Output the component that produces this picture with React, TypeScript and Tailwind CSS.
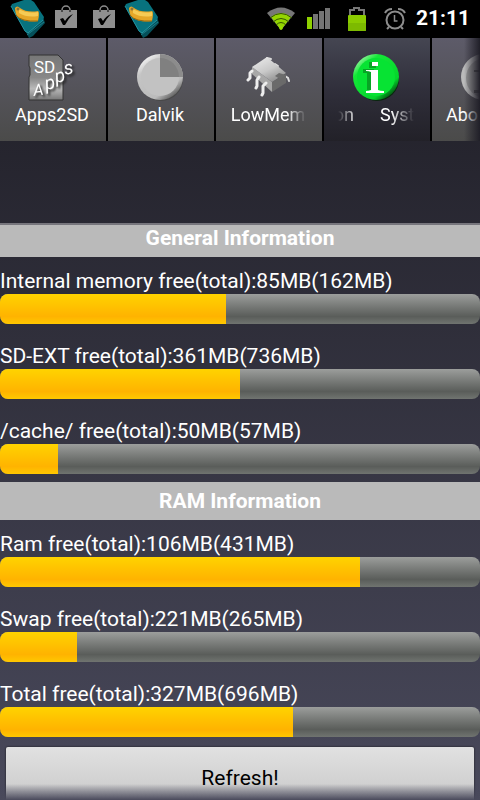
import type { ReactNode } from "react";

const general = [
  { label: "Internal memory free(total):85MB(162MB)", used: 47 },
  { label: "SD-EXT free(total):361MB(736MB)", used: 50 },
  { label: "/cache/ free(total):50MB(57MB)", used: 12 },
];

const ram = [
  { label: "Ram free(total):106MB(431MB)", used: 75 },
  { label: "Swap free(total):221MB(265MB)", used: 16 },
  { label: "Total free(total):327MB(696MB)", used: 61 },
];

function CardsIcon() {
  return (
    <svg viewBox="0 0 36 38" className="h-[38px] w-9 shrink-0">
      <path d="M2 9L17 34L19 38L23 36L35 23L33 17L24 3Z" fill="#05505a" />
      <path d="M17 35L34 22" stroke="#1b7d89" />
      <path d="M14 0H21L24 2L34 17L33 20L18 33L15 31L1 6L2 4Z" fill="#08727e" />
      <path d="M1 6L15 31L18 33L33 20" fill="none" stroke="#2395a2" />
      <path d="M5 8Q7 5 10 8Q17 13 28 11Q30 12 28 21Q17 23 9 18Q5 15 5 8Z" fill="#e5a728" />
      <path d="M9 9Q17 14 28 12L28 16Q17 18 9 13Z" fill="#f5cb55" />
      <path d="M6 15Q11 22 28 21" fill="none" stroke="#99680e" />
      <circle cx="8" cy="9" r="1.5" fill="#8c7338" />
    </svg>
  );
}

function BagIcon() {
  return (
    <svg viewBox="0 0 22 28" className="mt-1 h-7 w-[22px] shrink-0">
      <path d="M7 8V6a4 4 0 0 1 8 0v2" fill="none" stroke="#8c8c8c" strokeWidth="1.5" />
      <path d="M0 6H22V24H0Z" fill="#8f8f8f" />
      <path d="M7 6v2M15 6v2" stroke="#333" strokeWidth="1.5" />
      <path d="M5 15L8 14L10 17Q13 12 18 10Q13 15 10 21L8 21Z" fill="#000" />
    </svg>
  );
}

function WifiIcon() {
  return (
    <svg viewBox="0 0 30 24" className="h-6 w-[30px]">
      <path d="M15 23L1 6Q15 -5 29 6Z" fill="#777" />
      <path d="M15 23L5 10Q15 2 25 10Z" fill="#94d500" />
      <path d="M4 11Q15 2 26 11M7 15Q15 8 23 15M10 18Q15 13 20 18" fill="none" stroke="#345500" strokeWidth="1" />
      <circle cx="15" cy="21" r="1.8" fill="#9be000" />
    </svg>
  );
}

function SignalIcon() {
  return (
    <svg viewBox="0 0 24 22" className="h-[22px] w-6">
      <path d="M0 9h5v12H0Z" fill="#8fd100" />
      <path d="M6 6h5v15H6ZM12 3h5v18h-5ZM18 0h5v21h-5Z" fill="#747474" />
    </svg>
  );
}

function BatteryIcon() {
  return (
    <svg viewBox="0 0 20 26" className="h-[26px] w-5">
      <path d="M3 10V4H7V2H12V4H17V10" fill="none" stroke="#777" strokeWidth="2" />
      <rect x="1" y="9" width="18" height="16" rx="1" fill="#8bcb00" />
      <rect x="1" y="17" width="18" height="8" rx="1" fill="#7dba00" />
    </svg>
  );
}

function AlarmIcon() {
  return (
    <svg viewBox="0 0 22 24" className="h-6 w-[22px]" fill="none" stroke="#8d8d8d" strokeWidth="2">
      <circle cx="11" cy="13" r="8.5" />
      <path d="M10.5 8v6h3" strokeWidth="1.5" />
      <path d="M1 6Q3 2 8 2M21 6Q19 2 14 2M5 20l-2 2M17 20l2 2" />
    </svg>
  );
}

function SdIcon() {
  return (
    <svg viewBox="0 0 48 48" className="h-12 w-12 overflow-visible">
      <defs>
        <linearGradient id="card" x1="0" y1="0" x2="0" y2="1">
          <stop offset="0" stopColor="#777" />
          <stop offset=".5" stopColor="#888" />
          <stop offset=".75" stopColor="#bbb" />
          <stop offset="1" stopColor="#777" />
        </linearGradient>
      </defs>
      <path d="M1 1H30L35 6V46H1V23L2 21V14L1 12Z" fill="url(#card)" stroke="#333" />
      <text x="6" y="19" fontSize="17" fill="#fff">SD</text>
      <g fontSize="19" fontStyle="italic" fill="#fff" className="drop-shadow-[2px_2px_1px_#222]">
        <text x="6" y="42" fontSize="16" transform="rotate(-8 6 42)">A</text>
        <text x="18" y="36" transform="rotate(-12 18 36)">p</text>
        <text x="28" y="29" transform="rotate(-12 28 29)">p</text>
        <text x="37" y="21" transform="rotate(-12 37 21)">s</text>
      </g>
    </svg>
  );
}

function PieIcon() {
  return (
    <svg viewBox="0 0 48 48" className="h-12 w-12">
      <defs>
        <linearGradient id="disc" x1=".2" y1=".1" x2=".8" y2=".9">
          <stop offset="0" stopColor="#eee" />
          <stop offset=".2" stopColor="#c5c5c5" />
          <stop offset=".8" stopColor="#bbb" />
          <stop offset="1" stopColor="#666" />
        </linearGradient>
      </defs>
      <circle cx="25" cy="25" r="22" fill="#484848" />
      <circle cx="24" cy="23" r="23" fill="url(#disc)" />
      <circle cx="24" cy="23" r="19" fill="#c2c2c2" />
      <path d="M24 0A23 23 0 0 1 47 23H24Z" fill="#8c8c8c" />
      <path d="M24 4A19 19 0 0 1 43 23H24Z" fill="#808080" />
    </svg>
  );
}

function ChipIcon() {
  return (
    <svg viewBox="0 0 48 48" className="h-12 w-12">
      <defs>
        <linearGradient id="chip" x1=".2" y1="0" x2=".8" y2="1">
          <stop offset="0" stopColor="#e8e8e8" />
          <stop offset=".5" stopColor="#c9c9c9" />
          <stop offset="1" stopColor="#858585" />
        </linearGradient>
      </defs>
      <path d="M23 4l4 1M31 10l3 2M41 22l3 2 1 3" fill="none" stroke="#ddd" strokeWidth="2" strokeLinecap="round" />
      <path d="M8 13L28 28V38L8 20Z" fill="#a8a8a8" />
      <path d="M28 28L42 20V29L28 38Z" fill="#6a6a6a" />
      <path d="M8 13L23 3L42 19L28 28Z" fill="url(#chip)" />
      <path d="M31 22l4-3 7 2-6 4Z" fill="#6c6c6c" />
      <path d="M8 17l-2 2v5l-2 2M15 23l-2 3v6l-1 2M22 29l-3 3v7l-1 2" fill="none" stroke="#eee" strokeWidth="3" strokeLinejoin="round" strokeLinecap="round" />
    </svg>
  );
}

function InfoIcon() {
  return (
    <svg viewBox="0 0 48 48" className="h-12 w-12">
      <defs>
        <linearGradient id="green" x1=".15" y1=".1" x2=".85" y2=".9">
          <stop offset="0" stopColor="#8ff59a" />
          <stop offset=".2" stopColor="#14e837" />
          <stop offset=".8" stopColor="#05d42c" />
          <stop offset="1" stopColor="#034d10" />
        </linearGradient>
      </defs>
      <circle cx="25" cy="25" r="22" fill="#08260d" />
      <circle cx="24" cy="23" r="23" fill="url(#green)" />
      <circle cx="24" cy="23" r="19" fill="#07e333" />
      <path d="M17 8h7v6h-7ZM11 15h11v21h-7V19h-4Z" fill="#087b1b" opacity=".6" />
      <path d="M20 8h6v4h-6ZM14 16h12v20q2 1 6 1v2H14v-2q3 0 5-1V18q-2-1-5-1Z" fill="#fff" />
    </svg>
  );
}

function AboutIcon() {
  return (
    <svg viewBox="0 0 48 48" className="h-12 w-12">
      <circle cx="24" cy="23" r="23" fill="#bbb" />
      <circle cx="26" cy="24" r="20" fill="#999" />
      <path d="M20 8h7v5h-7ZM14 16h13v20h5v3H14v-3h6V18h-6Z" fill="#555" />
    </svg>
  );
}

function Tab({ icon, active, children }: { icon: ReactNode; active?: boolean; children: ReactNode }) {
  return (
    <button
      role="tab"
      aria-selected={!!active}
      className={`flex w-[106px] shrink-0 flex-col items-center pt-4 pr-0.5 ${
        active ? "bg-linear-to-b from-[#454652] via-[#302f3b] to-[#222128]" : "bg-linear-to-b from-[#5d5b69] to-[#4b4b4a]"
      }`}
    >
      {icon}
      <span className="block text-lg leading-[26px] text-white">{children}</span>
    </button>
  );
}

function SectionTitle({ children }: { children: ReactNode }) {
  return (
    <h2 className="flex h-[38px] shrink-0 items-center justify-center bg-[#bababa] pt-0.5 text-[21px] font-bold text-white">
      {children}
    </h2>
  );
}

function Meter({ label, used }: { label: string; used: number }) {
  return (
    <div className="shrink-0 pt-2.5 pb-2">
      <div className="h-[27px] text-[21px] leading-7 whitespace-nowrap text-white">{label}</div>
      <div
        role="progressbar"
        aria-label={label}
        aria-valuenow={used}
        className="h-[30px] overflow-hidden rounded-lg bg-linear-to-b from-[#9c9e9c] via-[#5a5d5a] via-75% to-[#707470]"
      >
        <div className="h-full bg-linear-to-b from-[#ffd300] via-[#ffb300] via-75% to-[#ffc800]" style={{ width: `${used}%` }} />
      </div>
    </div>
  );
}

export default function App() {
  return (
    <div className="flex h-screen flex-col overflow-hidden bg-linear-to-b from-[#1e1d25] to-[#49495b] font-[Roboto,sans-serif]">
      <header className="flex h-[38px] shrink-0 items-center justify-between bg-black px-2.5">
        <div className="flex items-start">
          <CardsIcon />
          <div className="ml-[9px] flex gap-4">
            <BagIcon />
            <BagIcon />
          </div>
          <div className="ml-[9px]">
            <CardsIcon />
          </div>
        </div>
        <div className="flex items-center">
          <WifiIcon />
          <span className="ml-[11px]"><SignalIcon /></span>
          <span className="ml-4"><BatteryIcon /></span>
          <span className="ml-[17px]"><AlarmIcon /></span>
          <span className="ml-2.5 text-[21px] font-bold text-white">21:11</span>
        </div>
      </header>

      <nav role="tablist" className="relative flex h-[103px] shrink-0 gap-0.5 overflow-hidden bg-black">
        <Tab icon={<SdIcon />}>Apps2SD</Tab>
        <Tab icon={<PieIcon />}>Dalvik</Tab>
        <Tab icon={<ChipIcon />}>
          <span className="block w-[76px] overflow-hidden mask-r-from-75% whitespace-nowrap">LowMem</span>
        </Tab>
        <Tab icon={<InfoIcon />} active>
          <span className="flex w-[76px] justify-between overflow-hidden mask-r-from-70% mask-l-from-75% whitespace-nowrap">
            <span className="flex w-4 justify-end">on</span>
            <span className="w-[34px]">Syst</span>
          </span>
        </Tab>
        <Tab icon={<AboutIcon />}>
          <span className="block w-[76px] text-left">Abo</span>
        </Tab>
        <div className="pointer-events-none absolute inset-y-0 right-0 w-4 bg-linear-to-r from-transparent to-[#201f28]" />
      </nav>

      <main className="mt-[82px] flex min-h-0 flex-1 flex-col">
        <section className="flex shrink-0 flex-col">
          <div className="flex h-[34px] flex-col justify-end overflow-hidden border-t-2 border-[#77767d]">
            <SectionTitle>General Information</SectionTitle>
          </div>
          {general.map((m) => (
            <Meter key={m.label} {...m} />
          ))}
        </section>
        <section className="flex shrink-0 flex-col">
          <SectionTitle>RAM Information</SectionTitle>
          {ram.map((m) => (
            <Meter key={m.label} {...m} />
          ))}
        </section>
        <div className="shrink-0 px-1.5 pt-0.5">
          <button className="h-16 w-full rounded-xs bg-linear-to-b from-[#e1e1e1] to-[#c5c5c5] text-[21px] text-black shadow-[0_0_2px_#111]">
            Refresh!
          </button>
        </div>
      </main>
      <div className="pointer-events-none fixed inset-x-0 bottom-0 h-4 bg-linear-to-b from-transparent to-[#49495b]" />
    </div>
  );
}
